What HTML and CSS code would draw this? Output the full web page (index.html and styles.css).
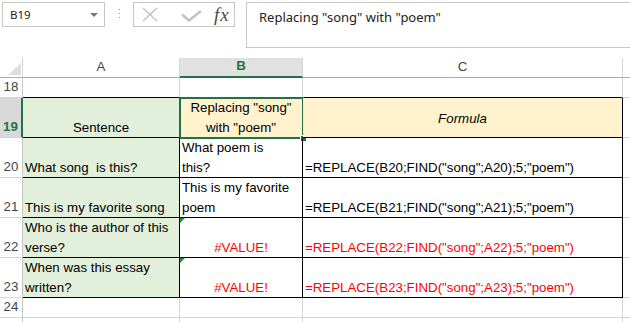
FILE: index.html
```html
<!DOCTYPE html>
<html>
<head>
<meta charset="utf-8">
<link rel="stylesheet" href="styles.css">
</head>
<body>
<div class="app">
  <div class="toolbar">
    <div class="namebox"><span class="ref">B19</span><span class="caret"></span></div>
    <div class="grip"><i></i><i></i><i></i></div>
    <div class="fbuttons">
      <svg class="ico-x" width="16" height="15" viewBox="0 0 16 15"><path d="M1 1L15 14M15 1L1 14" stroke="#c3c3c3" stroke-width="1.5" fill="none"/></svg>
      <svg class="ico-check" width="21" height="12" viewBox="0 0 21 12"><path d="M1 4.5L8 10.5L20 1" stroke="#c3c3c3" stroke-width="2.6" fill="none"/></svg>
      <span class="fx">fx</span>
    </div>
    <div class="fbar">Replacing "song" with "poem"</div>
  </div>

  <div class="sheet">
    <div class="corner"><span class="tri"></span></div>
    <div class="ch">A</div>
    <div class="ch sel">B</div>
    <div class="ch">C</div>
    <div class="ch d"></div>

    <div class="rh">18</div>
    <div class="c top"></div>
    <div class="c top"></div>
    <div class="c top"></div>
    <div class="c d"></div>

    <div class="rh sel">19</div>
    <div class="c tb green center"><span class="t">Sentence</span></div>
    <div class="c tb yellow center active"><span class="t">Replacing "song"<br>with "poem"</span></div>
    <div class="c tb yellow center middle"><span class="t it">Formula</span></div>
    <div class="c d"></div>

    <div class="rh">20</div>
    <div class="c tb green"><span class="t">What song&nbsp; is this?</span></div>
    <div class="c tb"><span class="t">What poem is<br>this?</span></div>
    <div class="c tb"><span class="t">=REPLACE(B20;FIND("song";A20);5;"poem")</span></div>
    <div class="c d"></div>

    <div class="rh">21</div>
    <div class="c tb green"><span class="t">This is my favorite song</span></div>
    <div class="c tb"><span class="t">This is my favorite<br>poem</span></div>
    <div class="c tb"><span class="t">=REPLACE(B21;FIND("song";A21);5;"poem")</span></div>
    <div class="c d"></div>

    <div class="rh">22</div>
    <div class="c tb green"><span class="t">Who is the author of this<br>verse?</span></div>
    <div class="c tb center err flag"><span class="t">#VALUE!</span></div>
    <div class="c tb err"><span class="t">=REPLACE(B22;FIND("song";A22);5;"poem")</span></div>
    <div class="c d"></div>

    <div class="rh">23</div>
    <div class="c tb green"><span class="t">When was this essay<br>written?</span></div>
    <div class="c tb center err flag"><span class="t">#VALUE!</span></div>
    <div class="c tb err"><span class="t">=REPLACE(B23;FIND("song";A23);5;"poem")</span></div>
    <div class="c d"></div>

    <div class="rh">24</div>
    <div class="c"></div>
    <div class="c"></div>
    <div class="c"></div>
    <div class="c d"></div>

    <div class="rh"></div>
    <div class="c"></div>
    <div class="c"></div>
    <div class="c"></div>
    <div class="c d"></div>
  </div>
</div>
</body>
</html>
```

FILE: styles.css
```css
html, body {
  margin: 0;
  padding: 0;
  background: #ffffff;
}

body {
  width: 630px;
  height: 322px;
  overflow: hidden;
}

.app {
  width: 630px;
  height: 322px;
  overflow: hidden;
  font-family: "Liberation Sans", Arial, sans-serif;
}

/* ---------- toolbar ---------- */
.toolbar {
  height: 58px;
  box-sizing: border-box;
  padding: 2px 0 0 2px;
  display: flex;
  align-items: flex-start;
}

.namebox {
  width: 103px;
  height: 25px;
  box-sizing: border-box;
  border: 1px solid #c6c6c6;
  display: flex;
  align-items: center;
  justify-content: space-between;
  padding: 0 6px 0 7px;
  font-family: "Noto Sans", sans-serif;
  font-size: 11.5px;
  color: #222;
}

.caret {
  width: 0;
  height: 0;
  border-left: 4px solid transparent;
  border-right: 4px solid transparent;
  border-top: 4px solid #777;
  margin-top: 1px;
}

.grip {
  margin: 7px 13px 0 14px;
  display: flex;
  flex-direction: column;
  gap: 3px;
}

.grip i {
  display: block;
  width: 1px;
  height: 1px;
  background: #8f8f8f;
}

.fbuttons {
  width: 102px;
  height: 25px;
  box-sizing: border-box;
  border: 1px solid #c6c6c6;
  display: flex;
  align-items: center;
  padding-left: 8px;
}

.ico-check {
  margin-left: 23px;
  margin-top: 2px;
}

.fx {
  margin-left: 12px;
  font-family: "Liberation Serif", serif;
  font-style: italic;
  font-size: 19px;
  letter-spacing: 1px;
  color: #4a4a4a;
  line-height: 20px;
}

.fbar {
  flex: 1;
  height: 46px;
  box-sizing: border-box;
  border: 1px solid #c6c6c6;
  border-right: none;
  margin-left: 11px;
  padding: 5px 0 0 12px;
  font-family: "Noto Sans", sans-serif;
  font-size: 13px;
  line-height: 18px;
  color: #222;
  white-space: nowrap;
}

/* ---------- sheet ---------- */
.sheet {
  display: grid;
  grid-template-columns: 23px 157px 123px 320px 7px;
  grid-template-rows: 20px 20px repeat(5, 40px) 20px 20px;
  font-size: 13.3px;
}

.corner {
  box-sizing: border-box;
  border-right: 1px solid #d4d4d4;
  border-bottom: 1px solid #ababab;
  display: flex;
  align-items: flex-end;
  justify-content: flex-end;
  padding: 0 1px 2px 0;
}

.tri {
  width: 0;
  height: 0;
  border-left: 13px solid transparent;
  border-bottom: 12px solid #dedede;
}

.ch {
  box-sizing: border-box;
  border-right: 1px solid #d4d4d4;
  border-bottom: 1px solid #ababab;
  display: flex;
  align-items: flex-end;
  justify-content: center;
  line-height: 20px;
  color: #444;
}

.ch.sel {
  background: #e1e1e1;
  border-bottom: 2px solid #217346;
  color: #217346;
  font-weight: bold;
}

.ch.d {
  border-right: none;
}

.rh {
  box-sizing: border-box;
  border-right: 1px solid #c6c6c6;
  border-bottom: 1px solid #d4d4d4;
  display: flex;
  align-items: flex-end;
  justify-content: center;
  line-height: 20px;
  color: #444;
  padding-bottom: 0;
}

.rh.sel {
  background: #d9d9d9;
  border-right: 2px solid #217346;
  color: #217346;
  font-weight: bold;
}

.c {
  box-sizing: border-box;
  border-right: 1px solid #d4d4d4;
  border-bottom: 1px solid #d4d4d4;
  display: flex;
  flex-direction: column;
  justify-content: flex-end;
  align-items: flex-start;
  padding: 0 2px;
  line-height: 20px;
  white-space: nowrap;
  color: #000;
  position: relative;
}

.t {
  display: block;
  margin-bottom: -1px;
}

.c.top {
  border-bottom-color: #000;
}

.c.tb {
  border-right-color: #000;
  border-bottom-color: #000;
}

.c.d {
  border-right: none;
}

.green {
  background: #e2efda;
}

.yellow {
  background: #fff2cc;
}

.center {
  align-items: center;
  text-align: center;
}

.middle {
  justify-content: center;
}

.middle .t {
  margin-bottom: -2px;
}

.it {
  font-style: italic;
}

.err {
  color: #ff0000;
}

.flag::after {
  content: "";
  position: absolute;
  top: 0;
  left: 0;
  width: 0;
  height: 0;
  border-top: 5px solid #1e8b3e;
  border-right: 5px solid transparent;
}

.active::before {
  content: "";
  position: absolute;
  left: -1px;
  top: -1px;
  right: -2px;
  bottom: -2px;
  border: 2px solid #217346;
}

.active::after {
  content: "";
  position: absolute;
  right: -4px;
  bottom: -4px;
  width: 5px;
  height: 5px;
  background: #217346;
  box-shadow: 0 0 0 1px #ffffff;
}
```
